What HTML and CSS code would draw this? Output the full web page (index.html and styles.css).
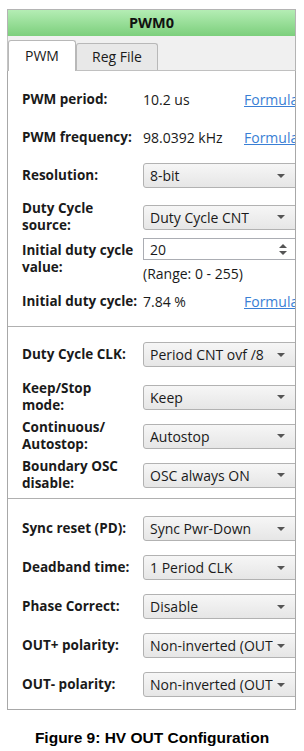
FILE: index.html
```html
<!DOCTYPE html>
<html lang="en">
<head>
    <meta charset="UTF-8">
    <meta name="viewport" content="width=device-width, initial-scale=1.0">
    <title>PWM0</title>
    <link rel="stylesheet" href="styles.css">
</head>
<body>

<div class="widget">
    <div class="title">PWM0</div>
    <div class="tabs">
        <div class="tab active">PWM</div>
        <div class="tab">Reg File</div>
    </div>
    <div class="panel">
        <div class="section">
            <div class="row text">
                <span class="label">PWM period:</span>
                <span class="value">10.2 us</span>
                <a class="formula" href="#">Formula</a>
            </div>
            <div class="row text">
                <span class="label">PWM frequency:</span>
                <span class="value">98.0392 kHz</span>
                <a class="formula" href="#">Formula</a>
            </div>
            <div class="row">
                <span class="label">Resolution:</span>
                <div class="select"><span>8-bit</span><i class="arrow"></i></div>
            </div>
            <div class="row">
                <span class="label">Duty Cycle<br>source:</span>
                <div class="select"><span>Duty Cycle CNT</span><i class="arrow"></i></div>
            </div>
            <div class="row tall">
                <span class="label">Initial duty cycle<br>value:</span>
                <div class="control">
                    <div class="spin">
                        <span>20</span>
                        <span class="spin-btns"><i class="up"></i><i class="down"></i></span>
                    </div>
                    <div class="range">(Range: 0 - 255)</div>
                </div>
            </div>
            <div class="row text after-tall">
                <span class="label">Initial duty cycle:</span>
                <span class="value">7.84 %</span>
                <a class="formula" href="#">Formula</a>
            </div>
        </div>

        <div class="section">
            <div class="row">
                <span class="label">Duty Cycle CLK:</span>
                <div class="select"><span>Period CNT ovf /8</span><i class="arrow"></i></div>
            </div>
            <div class="row">
                <span class="label">Keep/Stop<br>mode:</span>
                <div class="select"><span>Keep</span><i class="arrow"></i></div>
            </div>
            <div class="row">
                <span class="label">Continuous/<br>Autostop:</span>
                <div class="select"><span>Autostop</span><i class="arrow"></i></div>
            </div>
            <div class="row">
                <span class="label">Boundary OSC<br>disable:</span>
                <div class="select"><span>OSC always ON</span><i class="arrow"></i></div>
            </div>
        </div>

        <div class="section last">
            <div class="row">
                <span class="label">Sync reset (PD):</span>
                <div class="select"><span>Sync Pwr-Down</span><i class="arrow"></i></div>
            </div>
            <div class="row">
                <span class="label">Deadband time:</span>
                <div class="select"><span>1 Period CLK</span><i class="arrow"></i></div>
            </div>
            <div class="row">
                <span class="label">Phase Correct:</span>
                <div class="select"><span>Disable</span><i class="arrow"></i></div>
            </div>
            <div class="row">
                <span class="label">OUT+ polarity:</span>
                <div class="select"><span>Non-inverted (OUT)</span><i class="arrow"></i></div>
            </div>
            <div class="row">
                <span class="label">OUT- polarity:</span>
                <div class="select"><span>Non-inverted (OUT)</span><i class="arrow"></i></div>
            </div>
        </div>
    </div>
</div>

<p class="caption">Figure 9: HV OUT Configuration</p>

</body>
</html>
```

FILE: styles.css
```css
body {
    margin: 0;
    font-family: "Open Sans", sans-serif;
    font-size: 14px;
    color: #1a1a1a;
    background: #fff;
}
.widget {
    margin: 9px 0 0 7px;
    width: 289px;
}
.title {
    height: 26px;
    line-height: 26px;
    border: 1px solid #b4b4b4;
    border-bottom: none;
    background: linear-gradient(#b4edb4, #7ccf7c);
    text-align: center;
    font-weight: bold;
    font-size: 14.5px;
    color: #111;
}
.tabs {
    display: flex;
    align-items: flex-end;
    height: 34px;
    background: #f0f0f0;
    border-left: 1px solid #c4c4c4;
    border-right: 1px solid #b4b4b4;
    border-bottom: 1px solid #c0c0c0;
}
.tab {
    height: 26px;
    line-height: 26px;
    width: 80px;
    border: 1px solid #b8b8b8;
    border-bottom: none;
    border-radius: 3px 3px 0 0;
    background: #e8e8e8;
    text-align: center;
    font-size: 14px;
    color: #1a1a1a;
}
.tab.active {
    height: 30px;
    line-height: 30px;
    width: 66px;
    margin-bottom: -1px;
    background: #fff;
}
.panel {
    background: #fff;
    border: 1px solid #a8a8a8;
    border-top: none;
    overflow: hidden;
}
.section {
    padding: 15px 0 11px 14px;
}
.section + .section {
    border-top: 1px solid #b0b0b0;
    padding-top: 14px;
    padding-bottom: 13px;
}
.section.last {
    padding-top: 16px;
    padding-bottom: 11px;
}
.row {
    display: grid;
    grid-template-columns: 121px 156px;
    align-items: center;
    height: 27px;
}
.row + .row {
    margin-top: 12px;
}
.section:first-child .row + .row {
    margin-top: 11px;
}
.section:first-child .row.after-tall {
    margin-top: 6px;
}
.row.text {
    grid-template-columns: 121px 101px 70px;
}
.row.tall {
    height: auto;
    align-items: start;
}
.row.tall .label {
    margin-top: 4px;
}
.label {
    font-weight: bold;
    font-size: 13.5px;
    line-height: 17px;
    white-space: nowrap;
}
.value {
    white-space: nowrap;
}
.formula {
    color: #3a7fd5;
    text-decoration: underline;
    white-space: nowrap;
}
.select {
    display: flex;
    align-items: center;
    height: 25px;
    width: 156px;
    box-sizing: border-box;
    padding: 0 0 0 6px;
    border: 1px solid #b2b2b2;
    border-radius: 3px;
    background: linear-gradient(#f6f6f6, #e6e6e6);
    overflow: hidden;
}
.select span {
    white-space: nowrap;
    overflow: hidden;
    flex: 1;
}
.arrow {
    flex: none;
    width: 0;
    height: 0;
    margin: 0 13px 0 4px;
    border-left: 4px solid transparent;
    border-right: 4px solid transparent;
    border-top: 4px solid #555;
}
.spin {
    display: flex;
    align-items: center;
    justify-content: space-between;
    height: 22px;
    width: 156px;
    box-sizing: border-box;
    padding: 0 0 0 6px;
    border: 1px solid #abadb3;
    background: #fff;
}
.spin-btns {
    display: flex;
    flex-direction: column;
    gap: 3px;
    margin-right: 11px;
}
.spin-btns i {
    width: 0;
    height: 0;
    border-left: 4px solid transparent;
    border-right: 4px solid transparent;
}
.spin-btns .up {
    border-bottom: 4px solid #555;
}
.spin-btns .down {
    border-top: 4px solid #555;
}
.range {
    margin-top: 5px;
    line-height: 17px;
}
.caption {
    margin: 19px 0 0;
    text-align: center;
    font-family: "Liberation Sans", Arial, sans-serif;
    font-weight: bold;
    font-size: 15.5px;
    line-height: 17px;
    color: #000;
}
```
